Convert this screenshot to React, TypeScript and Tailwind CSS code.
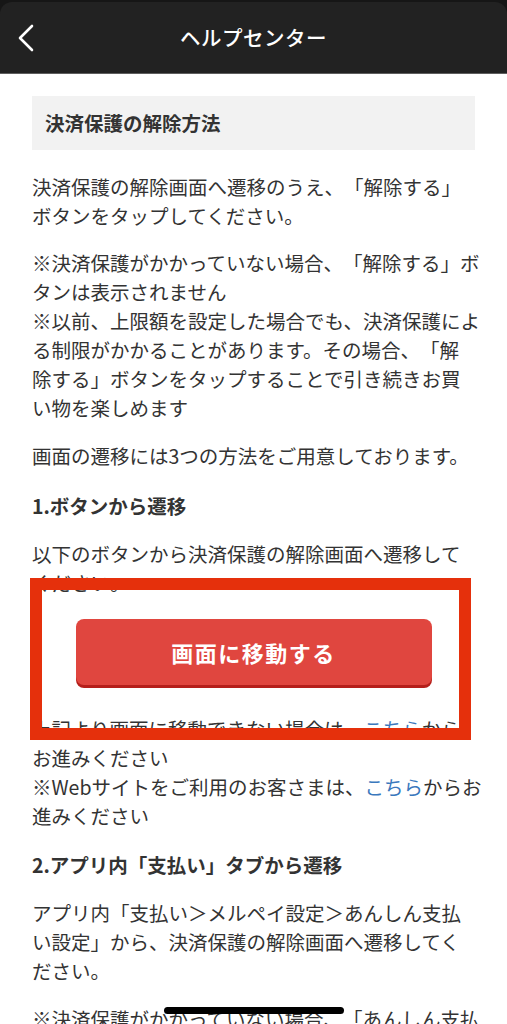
import React from 'react';

const font = { fontFamily: '"Noto Sans CJK JP", "Noto Sans", sans-serif' };

function Link({ children }: { children: React.ReactNode }) {
  return <span className="text-[#3a78bd]">{children}</span>;
}

// each entry is one visual line, breaks follow the screenshot
function Para({ lines, className = '' }: { lines: React.ReactNode[]; className?: string }) {
  return (
    <div className={`text-[19.5px] leading-[29px] text-[#333] whitespace-nowrap ${className}`}>
      {lines.map((l, i) => (
        <div key={i}>{l}</div>
      ))}
    </div>
  );
}

function Heading({ children, className = '' }: { children: React.ReactNode; className?: string }) {
  return (
    <div className={`text-[19.5px] leading-[29px] font-bold text-[#333] whitespace-nowrap ${className}`}>
      {children}
    </div>
  );
}

export default function App() {
  return (
    <div className="relative h-[1024px] overflow-hidden bg-white [text-spacing-trim:space-all]" style={font}>
      <div className="bg-[#161616] pt-[2px]">
        <header className="relative flex h-[72px] items-center justify-center rounded-t-[12px] border-b border-[#5e5e5e] bg-[#222]">
          <button className="absolute left-[14px] top-[20px] flex h-[32px] w-[24px] items-center justify-center">
            <svg width="18" height="28" viewBox="0 0 18 28" fill="none">
              <polyline
                points="15,2 3,14 15,26"
                stroke="white"
                strokeWidth="2.6"
                strokeLinecap="round"
                strokeLinejoin="round"
              />
            </svg>
          </button>
          <h1 className="text-[20.5px] font-medium text-white tracking-[0.5px]">ヘルプセンター</h1>
        </header>
      </div>

      <main className="px-[32px] pt-[22px]">
        <div className="flex h-[54px] items-center bg-[#f2f2f2] px-[13px]">
          <span className="text-[19.5px] font-bold text-[#333]">決済保護の解除方法</span>
        </div>

        <Para
          className="mt-[22px]"
          lines={['決済保護の解除画面へ遷移のうえ、「解除する」', 'ボタンをタップしてください。']}
        />
        <Para
          className="mt-[18px]"
          lines={[
            '※決済保護がかかっていない場合、「解除する」ボ',
            'タンは表示されません',
            '※以前、上限額を設定した場合でも、決済保護によ',
            'る制限がかかることがあります。その場合、「解',
            '除する」ボタンをタップすることで引き続きお買',
            'い物を楽しめます',
          ]}
        />
        <Para className="mt-[19px]" lines={['画面の遷移には3つの方法をご用意しております。']} />

        <Heading className="mt-[21px]">1.ボタンから遷移</Heading>
        <Para
          className="mt-[19px]"
          lines={['以下のボタンから決済保護の解除画面へ遷移して', 'ください。']}
        />

        <button className="mx-auto mt-[22px] flex h-[66px] w-[356px] items-center justify-center rounded-[8px] bg-[#e0463f] shadow-[0_3px_0_#b51f1b]">
          <span className="text-[22px] font-bold tracking-[1.5px] text-white">画面に移動する</span>
        </button>

        <Para
          className="mt-[29px]"
          lines={[
            <>
              上記より画面に移動できない場合は、<Link>こちら</Link>から
            </>,
            'お進みください',
            <>
              ※Webサイトをご利用のお客さまは、<Link>こちら</Link>からお
            </>,
            '進みください',
          ]}
        />

        <Heading className="mt-[20px]">2.アプリ内「支払い」タブから遷移</Heading>
        <Para
          className="mt-[19px]"
          lines={[
            'アプリ内「支払い＞メルペイ設定＞あんしん支払',
            'い設定」から、決済保護の解除画面へ遷移してく',
            'ださい。',
          ]}
        />
        <Para
          className="mt-[19px]"
          lines={['※決済保護がかかっていない場合、「あんしん支払', 'い設定」は表示されません']}
        />
      </main>

      {/* red annotation frame drawn over the screenshot */}
      <div className="pointer-events-none absolute left-[30px] top-[578px] h-[162px] w-[441px] border-[12px] border-[#e5300c]" />

      {/* iOS home indicator */}
      <div className="pointer-events-none absolute left-[164px] top-[1007px] h-[7px] w-[180px] rounded-full bg-black" />
    </div>
  );
}
